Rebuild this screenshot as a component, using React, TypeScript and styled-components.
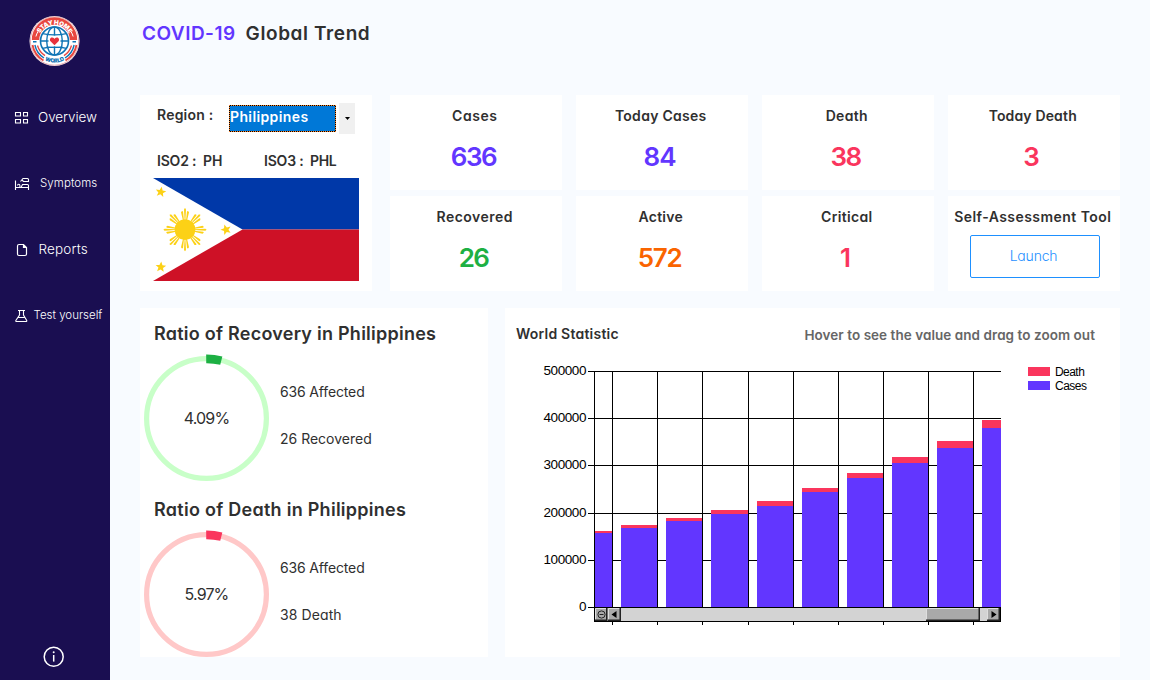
import React from 'react';
import styled, { createGlobalStyle } from 'styled-components';

const INK = '#303030';
const VIOLET = '#6236ff';
const RED = '#fa355d';
const GREEN = '#1db043';
const ORANGE = '#fa6400';

const Global = createGlobalStyle`
  body {
    margin: 0;
    color: ${INK};
    background: #f8fbff;
    font-family: Inter, 'Open Sans', sans-serif;
    font-feature-settings: 'cv11' 1;
  }
  * { box-sizing: border-box; }
`;

const Shell = styled.div`
  display: grid;
  grid-template-columns: 110px 1fr;
  width: 1150px;
  height: 680px;
  overflow: hidden;
`;

const Sidebar = styled.aside`
  display: flex;
  flex-direction: column;
  background: #1a0e51;
  color: #fff;
`;

const LogoBox = styled.div`
  height: 84px;
  padding: 15px 0 0 29px;
`;

const NavItem = styled.a<{ $size: number; $gap: number; $spacing?: number }>`
  display: flex;
  align-items: center;
  height: 66px;
  padding-left: 14px;
  gap: ${(p) => p.$gap}px;
  font-size: ${(p) => p.$size}px;
  font-weight: 350;
  letter-spacing: ${(p) => p.$spacing ?? 0}px;
  white-space: nowrap;
  svg { flex: none; margin-top: 2px; }
`;

const InfoBox = styled.div`
  margin: auto 0 12px 43px;
  height: 22px;
`;

const Main = styled.main`
  display: flex;
  flex-direction: column;
  padding: 21px 30px 23px;
`;

const Title = styled.h1`
  display: flex;
  gap: 10px;
  margin: 0 0 48px 2px;
  height: 26px;
  font-size: 19px;
  line-height: 26px;
  font-weight: 600;
  letter-spacing: 0.6px;
`;

const Accent = styled.span`
  color: ${VIOLET};
  letter-spacing: 0.48px;
`;

const TopRow = styled.div`
  display: grid;
  grid-template-columns: 232px 1fr;
  gap: 18px;
  height: 196px;
`;

const Card = styled.section`
  background: #fff;
`;

const RegionCard = styled(Card)`
  display: flex;
  flex-direction: column;
  padding: 8px 13px 10px;
`;

const RegionRow = styled.div`
  display: flex;
  height: 31px;
  padding-left: 4px;
`;

const Bold = styled.span<{ $width?: number; $spacing?: number }>`
  flex: none;
  width: ${(p) => (p.$width ? `${p.$width}px` : 'auto')};
  font-size: 14px;
  line-height: 24px;
  font-weight: 600;
  letter-spacing: ${(p) => p.$spacing ?? 0}px;
  white-space: nowrap;
`;

const Select = styled.div`
  width: 107px;
  height: 27px;
  margin: 2px 3px 0 0;
  background: #0078d7;
  outline: 1px dotted #ff8728;
  outline-offset: -1px;
  border: 1px solid #000;
  color: #fff;
  font-size: 14px;
  line-height: 22px;
  font-weight: 600;
  letter-spacing: 0.38px;
`;

const DropButton = styled.div`
  display: flex;
  align-items: center;
  justify-content: center;
  width: 16px;
  height: 31px;
  background: #f0f0f0;
`;

const IsoRow = styled.div`
  display: flex;
  height: 24px;
  margin: 15px 0 5px;
  padding-left: 4px;
`;

const StatGrid = styled.div`
  display: grid;
  grid-template-columns: repeat(4, 172px);
  grid-template-rows: repeat(2, 95px);
  gap: 6px 14px;
`;

const StatCard = styled(Card)`
  display: flex;
  flex-direction: column;
  align-items: center;
  padding-top: 11px;
`;

const StatLabel = styled.div<{ $spacing: number }>`
  padding-right: 2.5px;
  font-size: 14px;
  line-height: 20px;
  font-weight: 600;
  letter-spacing: ${(p) => p.$spacing}px;
  white-space: nowrap;
`;

const StatValue = styled.div<{ $color: string; $spacing: number }>`
  margin-top: 16px;
  padding-right: 5px;
  color: ${(p) => p.$color};
  font-size: 26px;
  line-height: 30px;
  font-weight: 600;
  letter-spacing: ${(p) => p.$spacing}px;
`;

const Launch = styled.button`
  width: 130px;
  height: 43px;
  margin: 8px 0 0 2px;
  padding: 0 3px 3px 0;
  border: 1px solid #1e90ff;
  border-radius: 2px;
  background: #fff;
  color: #1e90ff;
  font: 350 14px Inter, sans-serif;
  font-feature-settings: 'cv11' 1;
  letter-spacing: -0.2px;
`;

const BottomRow = styled.div`
  display: grid;
  grid-template-columns: 348px 615px;
  grid-template-rows: 349px;
  gap: 17px;
  height: 349px;
  margin-top: 17px;
`;

const RatioCard = styled(Card)`
  display: flex;
  flex-direction: column;
  padding: 12px 4px 0;
`;

const RatioBlock = styled.div`
  display: flex;
  flex: none;
  flex-direction: column;
  height: 176px;

  &:last-child { height: auto; }
`;

const RatioTitle = styled.h2<{ $spacing: number }>`
  margin: 0 0 0 10px;
  font-size: 18px;
  line-height: 28px;
  font-weight: 600;
  letter-spacing: ${(p) => p.$spacing}px;
`;

const RatioBody = styled.div`
  display: flex;
  gap: 11px;
  margin-top: 6px;
`;

const Facts = styled.div`
  display: flex;
  flex-direction: column;
  gap: 27px;
  padding-top: 28px;
`;

const Fact = styled.div<{ $spacing?: number }>`
  font-size: 14px;
  line-height: 20px;
  letter-spacing: ${(p) => p.$spacing ?? 0}px;
`;

const ChartCard = styled(Card)`
  padding: 16px 25px 0 11px;
`;

const ChartHead = styled.div`
  display: flex;
  justify-content: space-between;
  height: 36px;
  line-height: 20px;
  font-weight: 600;
`;

const ChartTitle = styled.h3`
  margin: 0;
  font-size: 14px;
  font-weight: 600;
  letter-spacing: 0.22px;
`;

const Hint = styled.span`
  padding-top: 1px;
  color: #666;
  font-size: 13.5px;
  letter-spacing: 0.05px;
`;

const Logo = () => (
  <svg width="51" height="52" viewBox="-25.5 -26 51 52" fill="none">
    <defs>
      <path id="logo-top" d="M-16.4 0A16.4 16.4 0 0 1 16.4 0" />
      <path id="logo-bottom" d="M-21.6 0A21.6 21.6 0 0 0 21.6 0" />
    </defs>
    <circle r="25" fill="#fff" />
    <circle r="24.2" stroke="#d9747a" strokeWidth="0.6" />
    <path d="M-22.7 -1A22.7 22.7 0 0 1 22.7 -1L15.3 -1A15.3 15.3 0 0 0 -15.3 -1Z" fill="#e8473f" />
    <path d="M-18.6 -4.5A19 19 0 0 1 -16.5 -9.5M18.6 -4.5A19 19 0 0 0 16.5 -9.5" stroke="#fff" strokeWidth="1" />
    <path d="M-22 4A22.4 22.4 0 0 0 -11 19.5M22 4A22.4 22.4 0 0 1 11 19.5" stroke="#e8473f" strokeWidth="1.9" />
    <path d="M-19.6 4A20 20 0 0 0 -10.5 17M19.6 4A20 20 0 0 1 10.5 17" stroke="#0f74b5" strokeWidth="1.4" />
    <path d="M-17 4.5A17.5 17.5 0 0 0 -9.5 14.6M17 4.5A17.5 17.5 0 0 1 9.5 14.6" stroke="#e8473f" strokeWidth="1.3" />
    <path d="M-21.5 .7h3.5M18 .7h3.5" stroke="#0f74b5" strokeWidth="1.6" />
    <circle r="14" fill="#fff" stroke="#0f74b5" strokeWidth="1.6" />
    <ellipse rx="7.8" ry="14" stroke="#0f74b5" strokeWidth="1.4" />
    <path d="M0 -14V14M-14 0H14M-12 -7.4Q0 -4.6 12 -7.4M-12 7.4Q0 4.6 12 7.4" stroke="#0f74b5" strokeWidth="1.4" />
    <rect x="-6" y="-5.3" width="12" height="10.6" rx="1.5" fill="#fff" />
    <path d="M0 4.2L-4 .3C-5.4 -1.6 -4 -3.7 -2.2 -3.5C-1 -3.4 -.4 -2.8 0 -1.9C.4 -2.8 1 -3.4 2.2 -3.5C4 -3.7 5.4 -1.6 4 .3Z" fill="#e8323c" />
    <text fill="#fff" fontSize="6.3" fontWeight="900" letterSpacing="-0.3">
      <textPath href="#logo-top" startOffset="50%" textAnchor="middle">STAY HOME</textPath>
    </text>
    <text fill="#0f74b5" fontSize="5.6" fontWeight="900" letterSpacing="-0.2">
      <textPath href="#logo-bottom" startOffset="50%" textAnchor="middle">WORLD</textPath>
    </text>
  </svg>
);

const OverviewIcon = () => (
  <svg width="15" height="14" fill="none" stroke="#fff" strokeWidth="1.1">
    <path d="M1.5 1.5h5v3.5h-5zM9.5 1.5h4v3.5h-4zM1.5 8.5h5v3.5h-5zM9.5 8.5h4v3.5h-4z" />
  </svg>
);

const BedIcon = () => (
  <svg width="16" height="14" fill="none" stroke="#fff" strokeWidth="1.1">
    <path d="M1.5 3.5V13M1.5 10.5H14.5M14.5 13V8.5Q14.5 7.5 13.5 7.5H8.5L7.2 10M3.5 8.5Q3.5 7.3 4.7 7.3Q5.9 7.3 5.9 8.5V10M6.5 4.5L9 1.5H13.5Q14.5 1.5 14.5 2.5V4.5H9.5L8 3" />
  </svg>
);

const ReportIcon = () => (
  <svg width="14" height="14" fill="none" stroke="#fff" strokeWidth="1.2">
    <path d="M3.5 3Q3.5 1.5 5 1.5H9.5L12.5 4.5V11Q12.5 12.5 11 12.5H5Q3.5 12.5 3.5 11ZM9.5 1.5V4.5H12.5" />
  </svg>
);

const FlaskIcon = () => (
  <svg width="14" height="14" fill="none" stroke="#fff" strokeWidth="1.1">
    <path d="M4 1.5H11M5.5 1.5V6L2 11.2Q1.3 12.5 2.7 12.5H11.8Q13.3 12.5 12.6 11.2L9.5 6V1.5M4.2 8.5H10.8" />
  </svg>
);

const InfoIcon = () => (
  <svg width="22" height="22" viewBox="0 0 22 22" fill="none" stroke="#fff">
    <circle cx="10.7" cy="10.7" r="9.5" strokeWidth="1.5" />
    <path d="M10.7 9V15.6" strokeWidth="1.5" />
    <circle cx="10.7" cy="6.2" r="1" fill="#fff" stroke="none" />
  </svg>
);

const STAR = '0,-5.4 1.5,-1.8 5.3,-1.6 2.3,.8 3.3,4.5 0,2.4 -3.3,4.5 -2.3,.8 -5.3,-1.6 -1.5,-1.8';

const Flag = () => (
  <svg width="206" height="103" viewBox="0 0 206 103">
    <rect width="206" height="51.5" fill="#0038a8" />
    <rect y="51.5" width="206" height="51.5" fill="#ce1126" />
    <path d="M0 0L89.5 51.5L0 103Z" fill="#fff" />
    <g fill="#fcd116" transform="translate(32 51.7)">
      <circle r="10.4" />
      {[0, 45, 90, 135, 180, 225, 270, 315].map((a) => (
        <g key={a} transform={`rotate(${a})`}>
          <path d="M-.4 -9L-1 -20.4L0 -21.6L1 -20.4L.4 -9Z" />
          <path d="M-2 -9L-4 -17.5L-3 -18.8L-2 -18.2L-1 -9ZM2 -9L4 -17.5L3 -18.8L2 -18.2L1 -9Z" />
        </g>
      ))}
    </g>
    <polygon points={STAR} fill="#fcd116" transform="translate(7.8 14) rotate(10)" />
    <polygon points={STAR} fill="#fcd116" transform="translate(73 51.6) rotate(-18)" />
    <polygon points={STAR} fill="#fcd116" transform="translate(7.8 89) rotate(5)" />
  </svg>
);

function Donut({ label, color, track }: { label: string; color: string; track: string }) {
  return (
    <svg width="125" height="128" viewBox="-62.5 -64.5 125 128" fill="none">
      <circle r="59.9" stroke={track} strokeWidth="5.2" />
      <path d="M-.3 -59.6A59.6 59.6 0 0 1 14.8 -57.8" stroke={color} strokeWidth="8.6" />
      <text x="0" y="5" textAnchor="middle" fontSize="16" letterSpacing="-0.85" fill={INK}>
        {label}
      </text>
    </svg>
  );
}

/* [left, width, top of the death segment, top of the cases segment] */
const bars = [
  [595, 17, 531, 533],
  [621, 36, 525, 528],
  [666, 36, 518, 521],
  [711, 37, 510, 514],
  [757, 36, 501, 506],
  [802, 36, 488, 492],
  [847, 36, 473, 478],
  [892, 36, 457, 463],
  [937, 36, 441, 448],
  [982, 19, 420, 428],
];
const columns = [612, 657, 702, 748, 793, 838, 883, 928, 973];
const scale: [number, number][] = [
  [500000, 371],
  [400000, 418],
  [300000, 465],
  [200000, 513],
  [100000, 560],
  [0, 607],
];

const Bevel = ({ x, y, w, h }: { x: number; y: number; w: number; h: number }) => (
  <g>
    <rect x={x} y={y} width={w} height={h} fill="#a9a9a9" />
    <path d={`M${x + 0.5} ${y + h - 1}V${y + 0.5}H${x + w - 1}`} stroke="#dedede" fill="none" />
    <path d={`M${x} ${y + h - 0.75}H${x + w - 0.75}V${y}`} stroke="#222" strokeWidth="1.5" fill="none" />
  </g>
);

const Chart = () => (
  <svg width="579" height="270" viewBox="516 360 579 270">
    <g fill="#000" shapeRendering="crispEdges">
      {scale.map(([v, y]) => (
        <rect key={v} x="588" y={y} width="413" height="1" />
      ))}
      {columns.map((x) => (
        <rect key={x} x={x} y="371" width="1" height="237" />
      ))}
      {columns.map((x) => (
        <rect key={x} x={x} y="622" width="1" height="3" />
      ))}
      {bars.map(([x, w, top, mid]) => (
        <g key={x}>
          <rect x={x} y={top} width={w} height={mid - top} fill={RED} />
          <rect x={x} y={mid} width={w} height={607 - mid} fill={VIOLET} />
        </g>
      ))}
      <rect x="594" y="371" width="1" height="251" />
      <rect x="594" y="607" width="407" height="15" />
      <rect x="595" y="608" width="405" height="13" fill="#d3d3d3" />
    </g>
    <Bevel x={595} y={608} w={12.5} h={13} />
    <Bevel x={608} y={608} w={13} h={13} />
    <Bevel x={926} y={608} w={54} h={13} />
    <Bevel x={987} y={608} w={13} h={13} />
    <circle cx="601.5" cy="614.5" r="3.6" fill="none" stroke="#222" />
    <path d="M599.5 614.5H603.5" stroke="#222" />
    <path d="M616.5 611V618L611.5 614.5ZM991.5 611V618L996.5 614.5Z" fill="#000" />
    <g fontFamily="'Liberation Sans', Arial, sans-serif" fill="#000">
      {scale.map(([v, y]) => (
        <text key={v} x="586" y={y + 4} textAnchor="end" fontSize="13.5" letterSpacing="-0.42">
          {v}
        </text>
      ))}
      <text x="1055" y="376" fontSize="12" letterSpacing="-0.55">Death</text>
      <text x="1055" y="390" fontSize="12" letterSpacing="-0.5">Cases</text>
    </g>
    <rect x="1028" y="367" width="22" height="9" fill={RED} />
    <rect x="1028" y="381" width="22" height="9" fill={VIOLET} />
  </svg>
);

const stats = [
  { label: 'Cases', ls: 0.55, value: '636', vls: -1.4, color: VIOLET },
  { label: 'Today Cases', ls: 0.28, value: '84', vls: -0.9, color: VIOLET },
  { label: 'Death', ls: 0.3, value: '38', vls: -1.6, color: RED },
  { label: 'Today Death', ls: 0.15, value: '3', vls: 0, color: RED },
  { label: 'Recovered', ls: 0.5, value: '26', vls: -1.6, color: GREEN },
  { label: 'Active', ls: 0.25, value: '572', vls: -1.3, color: ORANGE },
  { label: 'Critical', ls: 0.32, value: '1', vls: 0, color: RED },
];

export default function App() {
  return (
    <Shell>
      <Global />
      <Sidebar>
        <LogoBox><Logo /></LogoBox>
        <NavItem $size={13.5} $gap={9} $spacing={-0.1}><OverviewIcon />Overview</NavItem>
        <NavItem $size={11.5} $gap={10} $spacing={0.08}><BedIcon />Symptoms</NavItem>
        <NavItem $size={13.5} $gap={10.5} $spacing={0.15}><ReportIcon />Reports</NavItem>
        <NavItem $size={11.5} $gap={5.5}><FlaskIcon />Test yourself</NavItem>
        <InfoBox><InfoIcon /></InfoBox>
      </Sidebar>
      <Main>
        <Title><Accent>COVID-19</Accent>Global Trend</Title>
        <TopRow>
          <RegionCard>
            <RegionRow>
              <Bold $width={72} $spacing={0.2}>Region :</Bold>
              <Select>Philippines</Select>
              <DropButton>
                <svg width="5" height="3"><path d="M0 0H5L2.5 3Z" fill="#000" /></svg>
              </DropButton>
            </RegionRow>
            <IsoRow>
              <Bold $width={46} $spacing={-0.2}>ISO2 :</Bold>
              <Bold $width={61}>PH</Bold>
              <Bold $width={46} $spacing={-0.2}>ISO3 :</Bold>
              <Bold $spacing={-0.4}>PHL</Bold>
            </IsoRow>
            <Flag />
          </RegionCard>
          <StatGrid>
            {stats.map((s) => (
              <StatCard key={s.label}>
                <StatLabel $spacing={s.ls}>{s.label}</StatLabel>
                <StatValue $color={s.color} $spacing={s.vls}>{s.value}</StatValue>
              </StatCard>
            ))}
            <StatCard>
              <StatLabel $spacing={0.45}>Self-Assessment Tool</StatLabel>
              <Launch>Launch</Launch>
            </StatCard>
          </StatGrid>
        </TopRow>
        <BottomRow>
          <RatioCard>
            <RatioBlock>
              <RatioTitle $spacing={0.25}>Ratio of Recovery in Philippines</RatioTitle>
              <RatioBody>
                <Donut label="4.09%" color={GREEN} track="#c8ffc8" />
                <Facts>
                  <Fact $spacing={-0.15}>636 Affected</Fact>
                  <Fact>26 Recovered</Fact>
                </Facts>
              </RatioBody>
            </RatioBlock>
            <RatioBlock>
              <RatioTitle $spacing={0.27}>Ratio of Death in Philippines</RatioTitle>
              <RatioBody>
                <Donut label="5.97%" color={RED} track="#ffc8c8" />
                <Facts>
                  <Fact $spacing={-0.15}>636 Affected</Fact>
                  <Fact $spacing={0.1}>38 Death</Fact>
                </Facts>
              </RatioBody>
            </RatioBlock>
          </RatioCard>
          <ChartCard>
            <ChartHead>
              <ChartTitle>World Statistic</ChartTitle>
              <Hint>Hover to see the value and drag to zoom out</Hint>
            </ChartHead>
            <Chart />
          </ChartCard>
        </BottomRow>
      </Main>
    </Shell>
  );
}
